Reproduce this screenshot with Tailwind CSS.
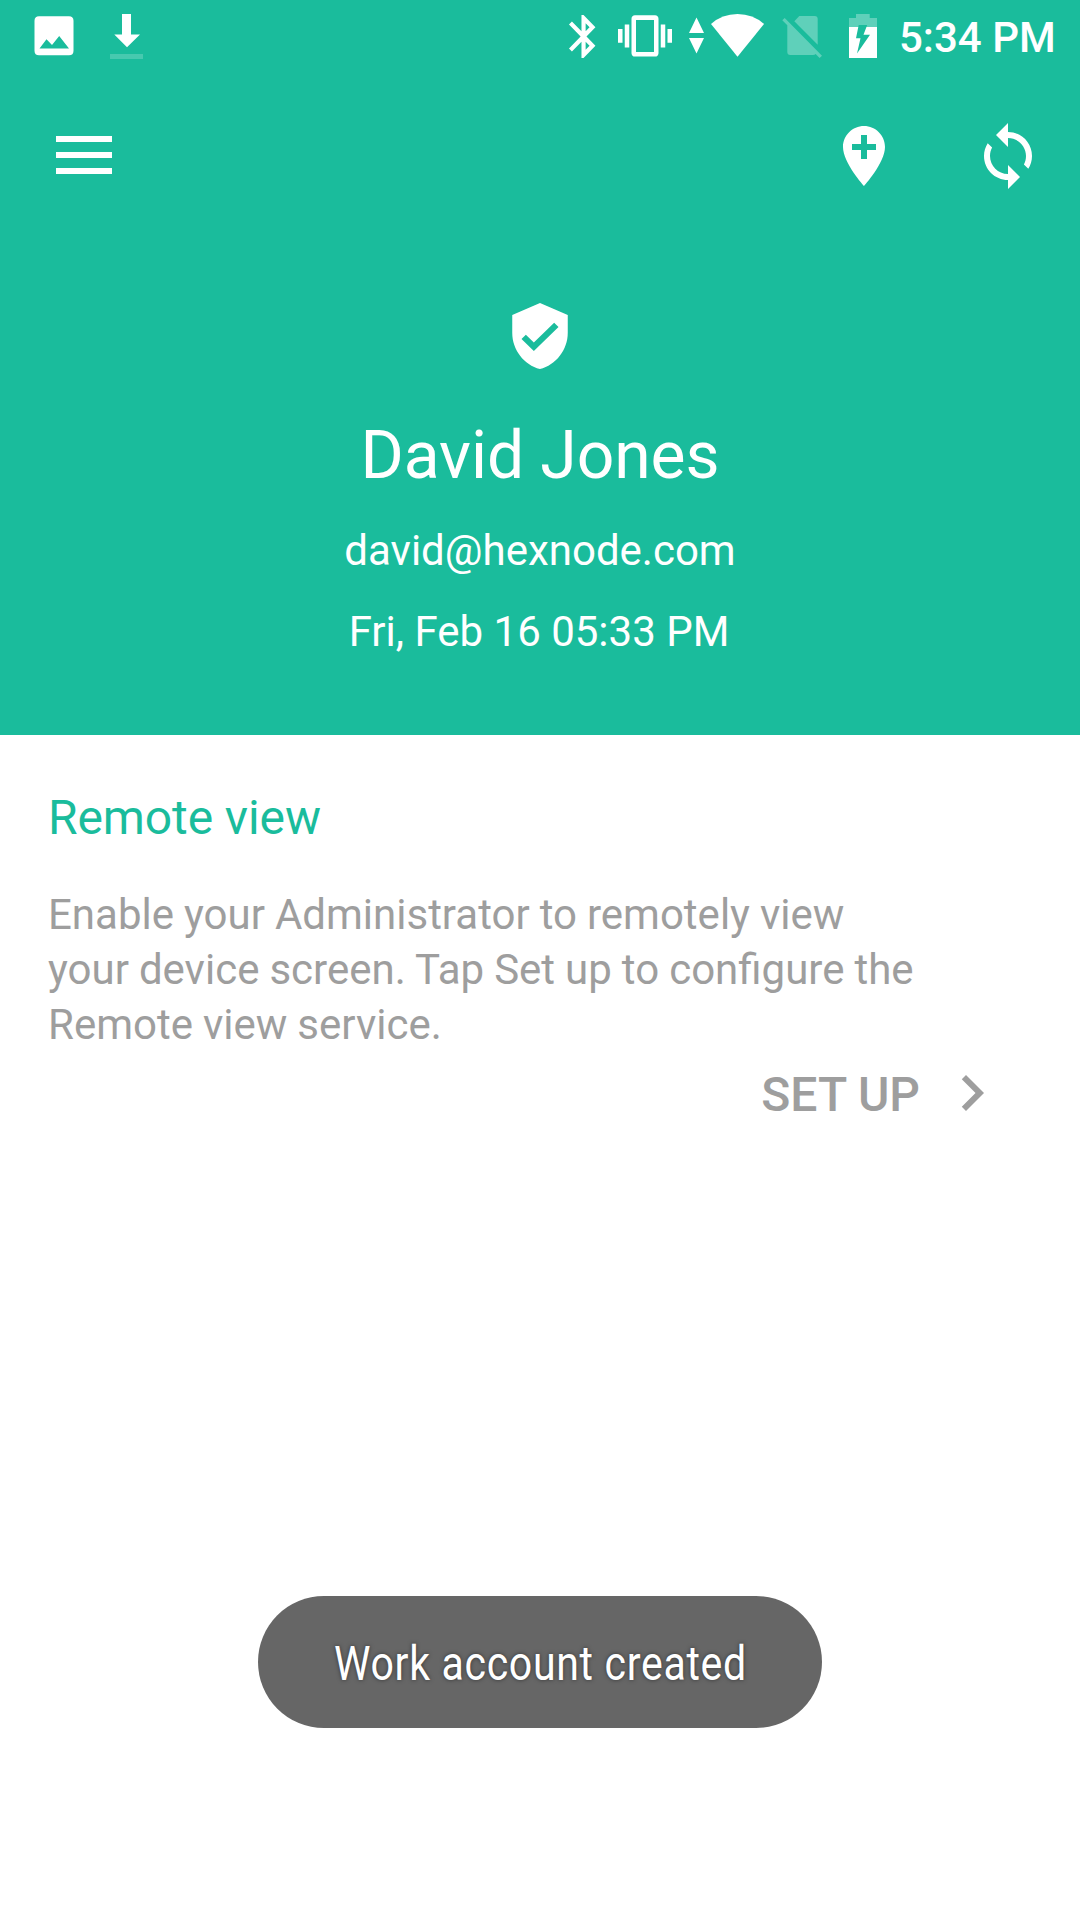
<!DOCTYPE html>
<html lang="en">
<head>
    <meta charset="UTF-8">
    <meta name="viewport" content="width=device-width, initial-scale=1.0">
    <title>Remote view</title>
    <script src="https://cdn.jsdelivr.net/npm/@tailwindcss/browser@4"></script>
</head>
<body class="bg-white font-[Roboto,sans-serif] w-[1080px] h-[1920px] overflow-hidden relative">
    <header class="bg-[#1abc9c] text-white h-[735px]">
        <!-- status bar -->
        <div class="h-[72px] flex justify-between">
            <svg class="w-[160px] h-[72px]" viewBox="0 0 160 72" fill="#fff">
                <path fill-rule="evenodd" d="M39 16.300h30q4.500 0 4.500 4.500v30q0 4.500-4.500 4.500h-30q-4.500 0-4.500-4.500v-30q0-4.500 4.500-4.500zM39.500 48.500h29.500L59.200 36 52 45 46.500 39.300z"/>
                <path d="M122 14h9v20.500h9L127 47.300 114.300 34.500h7.700z"/>
                <path fill-opacity=".2" d="M110 54h33v5h-33z"/>
            </svg>
            <div class="flex pr-[27px]">
                <svg class="w-[340px] h-[72px]" viewBox="561 0 340 72" fill="#fff">
                    <path transform="translate(558.6 10.700) scale(2.080 2.150)" d="M17.710 7.710L12 2h-1v7.590L6.410 5 5 6.410 10.590 12 5 17.590 6.410 19 11 14.410V22h1l5.710-5.710-4.300-4.290 4.300-4.290zM13 5.830l1.880 1.880L13 9.590V5.830zm1.880 10.460L13 18.170v-3.760l1.880 1.880z"/>
                    <path transform="translate(618 8.500) scale(2.250 2.290)" d="M0 15h2V9H0v6zm3 2h2V7H3v10zm19-8v6h2V9h-2zm-3 8h2V7h-2v10zM16.500 3h-9C6.670 3 6 3.670 6 4.500v15c0 .83.67 1.500 1.500 1.500h9c.83 0 1.500-.67 1.500-1.500v-15c0-.83-.67-1.500-1.500-1.500zM16 19H8V5h8v14z"/>
                    <path d="M696.500 17.500L704 33h-15zM689 38h15l-7.500 15.500z"/>
                    <path d="M711 24Q722 14 737.500 14T764 24L737.500 56.800z"/>
                    <g fill-opacity=".3">
                        <path d="M799.300 16h15.400q3 0 3 3v25.700L794.300 21.300z"/>
                        <path d="M782.300 20.300l2.400-2.400L822 55.700l-2.400 2.300-4-4q-.8 1-2.600 1h-22.700q-3 0-3-3V25.300z"/>
                        <path d="M856 14h13.700v4H877v9h-28v-9h7z"/>
                    </g>
                    <path d="M849 27h28v31h-28z"/>
                    <path fill="#1abc9c" d="M858.700 25h8.500l-3.700 9.700h6.500L857 53.500l3.500-15.200H856z"/>
                </svg>
                <span class="text-[42px] leading-[72px] font-medium w-[154px] whitespace-nowrap pt-[2px] -ml-[2px]">5:34 PM</span>
            </div>
        </div>
        <!-- toolbar -->
        <div class="h-[168px] flex items-center pl-[56px] pr-[36px]">
            <div class="flex flex-col gap-[10px] pb-[2px]">
                <div class="w-[56px] h-[6px] bg-white"></div>
                <div class="w-[56px] h-[6px] bg-white"></div>
                <div class="w-[56px] h-[6px] bg-white"></div>
            </div>
            <svg class="w-[72px] h-[72px] ml-auto" viewBox="0 0 24 24" fill="#fff">
                <path fill-rule="evenodd" d="M12 2C8.130 2 5 5.130 5 9c0 5.250 7 13 7 13s7-7.750 7-13c0-3.870-3.130-7-7-7zM11 5h2v3h3v2h-3v3h-2v-3H8V8h3z"/>
            </svg>
            <svg class="w-[72px] h-[72px] ml-[72px]" viewBox="0 0 24 24" fill="#fff">
                <path d="M12 4V1L8 5l4 4V6c3.310 0 6 2.690 6 6 0 1.010-.25 1.970-.7 2.800l1.460 1.460C19.540 15.030 20 13.570 20 12c0-4.420-3.580-8-8-8zm0 14c-3.310 0-6-2.690-6-6 0-1.010.25-1.970.7-2.800L5.240 7.740C4.460 8.970 4 10.430 4 12c0 4.420 3.580 8 8 8v3l4-4-4-4v3z"/>
            </svg>
        </div>
        <!-- profile -->
        <div class="flex flex-col items-center pt-[60px]">
            <svg class="w-[74px] h-[72px]" viewBox="0 0 24 24" fill="#fff" preserveAspectRatio="none">
                <path d="M12 1L3 5v6c0 5.550 3.840 10.740 9 12 5.160-1.260 9-6.450 9-12V5l-9-4zm-2 16l-4-4 1.410-1.410L10 14.170l6.590-6.590L18 9l-8 8z"/>
            </svg>
            <h1 class="text-[66px] leading-[80px] mt-[44px] tracking-[-0.1px]">David Jones</h1>
            <p class="text-[42px] leading-[50px] mt-[30px]">david@hexnode.com</p>
            <p class="text-[42px] leading-[50px] mt-[31px] pr-[2px]">Fri, Feb 16 05:33 PM</p>
        </div>
    </header>

    <main class="px-[48px] pt-[55px]">
        <h2 class="text-[48px] leading-[56px] tracking-[-0.1px] text-[#1abc9c]">Remote view</h2>
        <p class="text-[42px] leading-[55px] [word-spacing:-0.4px] text-[#9e9e9e] mt-[41px] w-[900px]">Enable your Administrator to remotely view<br>your device screen. Tap Set up to configure the<br>Remote view service.</p>
        <div class="flex items-center justify-end pr-[24px] mt-[5px] text-[#9e9e9e]">
            <span class="text-[48px] leading-[72px] font-medium pt-[2px]">SET UP</span>
            <svg class="w-[72px] h-[72px] ml-[16px] mb-[2px]" viewBox="0 0 24 24" fill="currentColor">
                <path d="M10 6L8.590 7.410 13.170 12l-4.580 4.590L10 18l6-6z"/>
            </svg>
        </div>
    </main>

    <!-- toast -->
    <div class="absolute left-[258px] top-[1596px] w-[564px] h-[132px] rounded-full bg-[#666] text-white flex items-center justify-center">
        <span class="text-[48px] leading-[56px] pt-[4px] whitespace-nowrap tracking-[0.8px] scale-x-[0.855] [text-shadow:0_0_5px_rgba(0,0,0,0.5)]">Work account created</span>
    </div>
</body>
</html>
